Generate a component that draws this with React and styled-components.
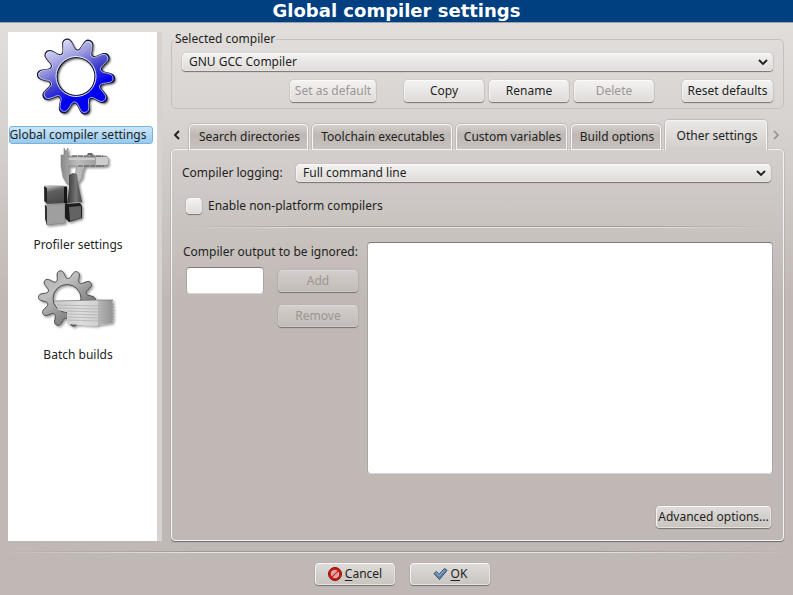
import React, { useState } from "react";
import styled, { createGlobalStyle, css } from "styled-components";

const GlobalStyle = createGlobalStyle`
  *, *::before, *::after { box-sizing: border-box; }
  body { margin: 0; }
  body, button, input, select, textarea {
    font-family: "Noto Sans", "Open Sans", sans-serif;
    font-size: 12px;
    line-height: 16px;
    color: #221f1e;
  }
`;

const Dialog = styled.div`
  min-height: 100vh;
  display: flex;
  flex-direction: column;
  background: #c0b8b5 linear-gradient(#e1dedc 22px, #d6d2cf 130px, #c0b8b5 300px) no-repeat;
`;

const TitleBar = styled.header`
  height: 23px;
  background: #003f80;
  border-bottom: 1px solid #9aa3ad;
  text-align: center;
`;

const Title = styled.h1`
  margin: 0;
  font: bold 18px/22px "DejaVu Sans", sans-serif;
  color: #fff;
`;

const Main = styled.main`
  flex: 1;
  display: flex;
  gap: 9px;
  padding: 9px 9px 10px 8px;
`;

const Sidebar = styled.nav`
  width: 154px;
  flex: none;
  padding-top: 4px;
  background: #fff;
  border-right: 5px solid #d6d2cf;
`;

const SidebarItem = styled.button`
  width: 100%;
  height: 110px;
  padding: 0 3px 0 0;
  border: 0;
  background: none;
  display: flex;
  flex-direction: column;
  align-items: center;
`;

const SidebarLabel = styled.span`
  height: 18px;
  padding: 0 6px 0 0;
  border: 1px solid transparent;
  border-radius: 3px;
  white-space: nowrap;
  ${(p) => p.$selected && css`
    background: linear-gradient(#cbe6fa, #97c9ee);
    border-color: #79b3dc;
  `}
`;

const Content = styled.div`
  flex: 1;
  min-width: 0;
  display: flex;
  flex-direction: column;
`;

const Group = styled.fieldset`
  margin: 0 0 11px;
  padding: 7px 10px 6px;
  min-width: 0;
  border: 1px solid #c6c1be;
  border-radius: 5px;
`;

const Legend = styled.legend`
  margin-left: -8px;
  padding: 0 1px;
  line-height: 14px;
`;

const raised = css`
  border: 1px solid;
  border-color: #fafaf9 #e6e3e1 #e6e3e1 #f4f3f2;
  border-radius: 4px;
  box-shadow: 0 1px 1px #77726f, 0 0 1px 0 #8f8a87;
  background: ${(p) => p.$tone === "dim"
    ? "linear-gradient(#d3cecb, #c3bbb8)"
    : p.$tone === "mid"
      ? "linear-gradient(#dedbd8, #c9c5c1)"
      : "linear-gradient(#f3f2f1, #dfdcda)"};
`;

const Button = styled.button`
  ${raised}
  width: ${(p) => p.$width || 80}px;
  height: 22px;
  padding: 0;
  display: flex;
  flex: none;
  align-items: center;
  justify-content: center;
  gap: 3px;
  white-space: nowrap;
  ${(p) => p.$tone === "dim" && css`border-color: #dcd8d6 #cdc8c5 #cdc8c5;`}
  &:disabled { color: #9b9693; }
`;

const ButtonRow = styled.div`
  display: flex;
  justify-content: flex-end;
  gap: 28px;
  margin-top: 9px;
`;

const ButtonCluster = styled.div`
  display: flex;
  gap: 5px;
`;

const SelectFrame = styled.div`
  flex: 1;
  display: grid;
  align-items: center;
  > * { grid-area: 1 / 1; }
  > svg { justify-self: end; margin-right: 4px; pointer-events: none; }
`;

const SelectControl = styled.select`
  ${raised}
  appearance: none;
  width: 100%;
  height: 18px;
  padding: 0 24px 0 6px;
  line-height: 16px;
`;

const TabBar = styled.div`
  display: flex;
  align-items: flex-end;
  height: 30px;
  margin-bottom: -1px;
  position: relative;
`;

const Scroll = styled.button`
  width: ${(p) => p.$width}px;
  height: 30px;
  padding: 0;
  border: 0;
  background: none;
  flex: none;
  display: flex;
  align-items: center;
  justify-content: ${(p) => p.$align};
`;

const TabList = styled.div`
  flex: 1;
  display: grid;
  grid-template-columns: 119fr 140fr 111fr 90fr 102fr;
  gap: 4px;
  align-items: end;
`;

const Tab = styled.button`
  height: 26px;
  padding: 0 0 0 2px;
  white-space: nowrap;
  border: 1px solid #f6f5f4;
  border-radius: 4px 4px 0 0;
  box-shadow: 0 0 1px 1px #c0bbb8;
  clip-path: inset(-2px -2px 0 -2px);
  background: linear-gradient(#d5d1ce, #bfb8b4 40%, #c8c2bf);
  ${(p) => p.$active && css`
    height: 30px;
    border-bottom: 0;
    background: linear-gradient(#eae8e6, #d2cdca);
  `}
`;

const Panel = styled.section`
  flex: 1;
  display: flex;
  flex-direction: column;
  padding: 14px 10px 12px;
  border: 1px solid #f4f3f2;
  border-radius: 4px;
  box-shadow: 0 1px 1px #6f6a67, 0 0 1px 0 #8f8a87;
`;

const Field = styled.div`
  display: flex;
  align-items: center;
  padding-right: 2px;
`;

const FieldLabel = styled.label`
  width: 114px;
`;

const CheckLabel = styled.label`
  display: flex;
  align-items: center;
  align-self: flex-start;
  gap: 6px;
  margin: 16px 0 0 4px;
`;

const CheckBox = styled.input`
  ${raised}
  appearance: none;
  width: 16px;
  height: 16px;
  margin: 0;
  &:checked { background: #5b7fa8; }
`;

const Rule = styled.hr`
  flex: none;
  width: 100%;
  height: 2px;
  margin: ${(p) => p.$space};
  border: 0;
  background:
    linear-gradient(90deg, transparent, #a19b98 25%, #a19b98 75%, transparent) 0 0 / 100% 1px no-repeat,
    linear-gradient(90deg, transparent, #e6e3e1 25%, #e6e3e1 75%, transparent) 0 1px / 100% 1px no-repeat;
`;

const Ignored = styled.div`
  flex: 1;
  display: grid;
  grid-template-columns: 176px 1fr;
  column-gap: 9px;
`;

const IgnoredForm = styled.div`
  display: grid;
  grid-template-columns: 78px 80px;
  grid-template-rows: 20px 27px;
  gap: 5px 14px;
  align-content: start;
  align-items: center;
  padding-left: 4px;
`;

const IgnoredLabel = styled.label`
  grid-column: 1 / -1;
  margin-left: -3px;
  white-space: nowrap;
`;

const RemoveButton = styled(Button)`
  grid-column: 2;
  margin-top: 6px;
`;

const well = css`
  border: 1px solid;
  border-color: #7f7a77 #aaa5a2 #d8d4d2;
  border-radius: 4px;
  background: #fff;
  outline: 0;
`;

const TextInput = styled.input`
  ${well}
  width: 100%;
  height: 27px;
  padding: 0 4px;
`;

const OutputBox = styled.textarea`
  ${well}
  width: 100%;
  height: 100%;
  min-height: 120px;
  padding: 4px;
  resize: none;
  display: block;
`;

const PanelFooter = styled.div`
  display: flex;
  justify-content: flex-end;
  margin: 32px 2px 0;
`;

const Footer = styled.footer`
  display: flex;
  justify-content: center;
  gap: 15px;
  padding: 10px 0 10px 12px;
`;

const Accel = styled.u`
  text-underline-offset: 2px;
`;

function gearPath(cx, cy, root, tip) {
  const mid = (root + tip) / 2;
  const amp = (tip - root) / 2;
  const points = [];
  for (let deg = 0; deg < 360; deg += 2) {
    const wave = Math.tanh(1.4 * Math.cos(((deg + 105) * 10 * Math.PI) / 180)) / Math.tanh(1.4);
    const r = mid + amp * wave;
    const a = (deg * Math.PI) / 180;
    points.push(`${(cx + r * Math.cos(a)).toFixed(2)} ${(cy + r * Math.sin(a)).toFixed(2)}`);
  }
  return `M${points.join("L")}Z`;
}

function ring(cx, cy, r) {
  return `M${cx - r} ${cy}a${r} ${r} 0 1 0 ${2 * r} 0a${r} ${r} 0 1 0 ${-2 * r} 0Z`;
}

function BlueGear() {
  return (
    <svg width="90" height="90" viewBox="0 0 90 90" aria-hidden="true">
      <defs>
        <linearGradient id="blue" x1="0.2" y1="0.05" x2="0.65" y2="0.9">
          <stop offset="0" stopColor="#e4e4f8" />
          <stop offset="0.3" stopColor="#9a9ade" />
          <stop offset="0.55" stopColor="#4444cc" />
          <stop offset="0.8" stopColor="#0000f0" />
        </linearGradient>
        <filter id="soft"><feGaussianBlur stdDeviation="1.2" /></filter>
      </defs>
      <path d={gearPath(41.5, 42, 26.5, 38.5) + ring(41.5, 42, 19)} fillRule="evenodd" fill="#000" opacity="0.7" filter="url(#soft)" />
      <path d={gearPath(40, 40.5, 26.5, 38.5) + ring(40, 40.5, 19)} fillRule="evenodd" fill="url(#blue)" stroke="#15152c" strokeWidth="1.2" />
      <path d={gearPath(40, 40.5, 25.5, 37)} fill="none" stroke="#e2e2ff" strokeWidth="1" opacity="0.75" />
      <circle cx="40" cy="40.5" r="20" fill="none" stroke="#e6e6ff" strokeWidth="1" />
    </svg>
  );
}

function Profiler() {
  return (
    <svg width="90" height="90" viewBox="0 0 90 90" aria-hidden="true">
      <defs>
        <linearGradient id="steel" x1="0" y1="0" x2="1" y2="0">
          <stop offset="0" stopColor="#8a8a8a" /><stop offset="0.35" stopColor="#bdbdbd" /><stop offset="1" stopColor="#8c8c8c" />
        </linearGradient>
        <linearGradient id="cubeDark" x1="0.2" y1="0" x2="0.5" y2="1">
          <stop offset="0" stopColor="#d0d0d0" /><stop offset="0.35" stopColor="#606060" /><stop offset="1" stopColor="#484848" />
        </linearGradient>
        <linearGradient id="weight" x1="0" y1="0" x2="1" y2="0">
          <stop offset="0" stopColor="#333" /><stop offset="0.6" stopColor="#777" /><stop offset="1" stopColor="#444" />
        </linearGradient>
        <filter id="cast" x="-20%" y="-20%" width="150%" height="150%">
          <feDropShadow dx="1.5" dy="1.5" stdDeviation="1" floodOpacity="0.45" />
        </filter>
      </defs>
      <g filter="url(#cast)">
        <path d="M28 2l2 4 2-4v8h38l2 2v7l-2 1H49l-2 6-1 6-4 5-3 1v-9l2-9h-8v8l2 5v6l-4-1-4-7-2-11V9h3z" fill="url(#steel)" stroke="#777" strokeWidth="0.5" />
        <path d="M60 11h11l1 2v5l-1 1H60z" fill="#cdcdcd" />
        <path d="M33 13h26" stroke="#ccc" strokeWidth="2" />
        <path d="M36 10h31M42 20h26" stroke="#555" strokeWidth="1" strokeDasharray="5 1" />
        <path d="M51 9l1-2h4l1 2z" fill="#666" />
        <path d="M8 40l2-1 21 1v17l-20 1-3-3z" fill="url(#cubeDark)" />
        <path d="M8 40l3 2v15l-2-2z" fill="#222" />
        <path d="M28 41h3v17l-3-1z" fill="#181818" />
        <path d="M33 29l4-2 4 1 1 8 4 20-15 1 2-15z" fill="url(#weight)" />
        <path d="M9 59l20-1v19l-18 2z" fill="#9f9f9f" stroke="#777" strokeWidth="0.6" />
        <path d="M9 59l2 2v18l-2-6z" fill="#333" />
        <path d="M29 58l15-1 2 3v12l-13 4-4-4z" fill="#1c1c1c" />
        <path d="M33 61l12-1v12l-11 3z" fill="#646464" />
      </g>
    </svg>
  );
}

function BatchBuilds() {
  const sheets = [49, 52, 55, 58, 61, 64];
  return (
    <svg width="90" height="90" viewBox="0 0 90 90" aria-hidden="true">
      <defs>
        <linearGradient id="gray" x1="0" y1="0" x2="0.8" y2="1">
          <stop offset="0" stopColor="#a8a8a8" /><stop offset="0.35" stopColor="#c0c0c0" /><stop offset="1" stopColor="#5e5e5e" />
        </linearGradient>
        <linearGradient id="paper" x1="0" y1="0" x2="1" y2="0">
          <stop offset="0" stopColor="#c9c9c9" /><stop offset="0.6" stopColor="#ddd" /><stop offset="1" stopColor="#d0d0d0" />
        </linearGradient>
        <linearGradient id="edge" x1="0" y1="0" x2="1" y2="0">
          <stop offset="0" stopColor="#b9b9b9" /><stop offset="1" stopColor="#8e8e8e" />
        </linearGradient>
        <filter id="drop" x="-20%" y="-20%" width="150%" height="150%">
          <feDropShadow dx="1.5" dy="1.5" stdDeviation="1" floodOpacity="0.4" />
        </filter>
      </defs>
      <g filter="url(#drop)">
        <path d={gearPath(31, 42.5, 20, 28.5) + ring(31, 42.5, 14)} fillRule="evenodd" fill="url(#gray)" stroke="#4c4c4c" strokeWidth="1" />
        <path d="M19 45l43-1v26l-31-2V56l-9-2z" fill="url(#paper)" />
        <path d="M62 44h15l-1 3 2 1-2 2 2 1-2 2 2 1-2 2 2 1-2 2 2 1-2 2 2 1-2 2 1 2-15 2z" fill="url(#edge)" />
        {sheets.map((y) => (
          <path key={y} d={`M${y < 55 ? 21 : 31} ${y}L62 ${y + 1}L77 ${y}`} fill="none" stroke="#a4a4a4" strokeWidth="0.6" />
        ))}
        <path d="M19 45l43-1 15 0" fill="none" stroke="#777" strokeWidth="0.7" />
      </g>
    </svg>
  );
}

function Chevron({ direction, muted }) {
  const paths = { down: "M2 4l4 4 4-4", left: "M8 2L4 6l4 4", right: "M4 2l4 4-4 4" };
  return (
    <svg width="12" height="12" viewBox="0 0 12 12" aria-hidden="true">
      <path d={paths[direction]} fill="none" stroke={muted ? "#918c89" : "#221f1e"} strokeWidth={muted ? 1.5 : 1.9} />
    </svg>
  );
}

function CancelIcon() {
  return (
    <svg width="14" height="14" viewBox="0 0 14 14" aria-hidden="true">
      <circle cx="7" cy="7" r="6.5" fill="#c91c14" stroke="#85120d" />
      <circle cx="7" cy="7" r="3.7" fill="#d7a5a0" stroke="#f0d4d1" strokeWidth="0.8" />
      <path d="M3.8 10.2l6.4-6.4" stroke="#c91c14" strokeWidth="2.4" />
      <path d="M4 8.8L8.8 4M5.3 10.1L10 5.3" stroke="#f6e4e2" strokeWidth="0.8" />
    </svg>
  );
}

function OkIcon() {
  return (
    <svg width="15" height="14" viewBox="0 0 15 14" aria-hidden="true">
      <path d="M1 6.5l2.5-2 2.5 3L11.5 1.5l2.5 1.8L6.5 12.5z" fill="#6288b5" stroke="#2f4663" strokeLinejoin="round" />
      <path d="M2.5 6.4l1-.7 2.5 3 5.6-5.8" fill="none" stroke="#a0bcdb" strokeWidth="0.8" />
    </svg>
  );
}

function Select({ id, label, value }) {
  return (
    <SelectFrame>
      <SelectControl id={id} aria-label={label} defaultValue={value}>
        <option>{value}</option>
      </SelectControl>
      <Chevron direction="down" />
    </SelectFrame>
  );
}

const pages = [
  { name: "Global compiler settings", Icon: BlueGear },
  { name: "Profiler settings", Icon: Profiler },
  { name: "Batch builds", Icon: BatchBuilds },
];

const tabs = [
  "Search directories",
  "Toolchain executables",
  "Custom variables",
  "Build options",
  "Other settings",
];

export default function App() {
  const [page, setPage] = useState(0);
  const [tab, setTab] = useState(4);

  return (
    <Dialog>
      <GlobalStyle />
      <TitleBar><Title>Global compiler settings</Title></TitleBar>
      <Main>
        <Sidebar>
          {pages.map(({ name, Icon }, i) => (
            <SidebarItem key={name} onClick={() => setPage(i)}>
              <Icon />
              <SidebarLabel $selected={i === page}>{name}</SidebarLabel>
            </SidebarItem>
          ))}
        </Sidebar>
        <Content>
          <Group>
            <Legend>Selected compiler</Legend>
            <Select label="Selected compiler" value="GNU GCC Compiler" />
            <ButtonRow>
              <Button $width={86} disabled>Set as default</Button>
              <ButtonCluster>
                <Button>Copy</Button>
                <Button>Rename</Button>
                <Button disabled>Delete</Button>
              </ButtonCluster>
              <Button $width={91}>Reset defaults</Button>
            </ButtonRow>
          </Group>
          <TabBar>
            <Scroll $width={18} $align="flex-start" aria-label="Scroll tabs left">
              <Chevron direction="left" />
            </Scroll>
            <TabList role="tablist">
              {tabs.map((name, i) => (
                <Tab key={name} role="tab" aria-selected={i === tab} $active={i === tab} onClick={() => setTab(i)}>
                  {name}
                </Tab>
              ))}
            </TabList>
            <Scroll $width={17} $align="center" aria-label="Scroll tabs right" disabled>
              <Chevron direction="right" muted />
            </Scroll>
          </TabBar>
          <Panel>
            <Field>
              <FieldLabel htmlFor="logging">Compiler logging:</FieldLabel>
              <Select id="logging" value="Full command line" />
            </Field>
            <CheckLabel>
              <CheckBox type="checkbox" />
              Enable non-platform compilers
            </CheckLabel>
            <Rule $space="12px 0 14px" />
            <Ignored>
              <IgnoredForm>
                <IgnoredLabel htmlFor="ignore">Compiler output to be ignored:</IgnoredLabel>
                <TextInput id="ignore" />
                <Button $tone="dim" disabled>Add</Button>
                <RemoveButton $tone="dim" disabled>Remove</RemoveButton>
              </IgnoredForm>
              <OutputBox aria-label="Ignored compiler output" />
            </Ignored>
            <PanelFooter>
              <Button $width={115} $tone="mid">Advanced options...</Button>
            </PanelFooter>
          </Panel>
        </Content>
      </Main>
      <Rule $space="0" />
      <Footer>
        <Button $tone="mid"><CancelIcon /><span><Accel>C</Accel>ancel</span></Button>
        <Button $tone="mid"><OkIcon /><span><Accel>O</Accel>K</span></Button>
      </Footer>
    </Dialog>
  );
}
